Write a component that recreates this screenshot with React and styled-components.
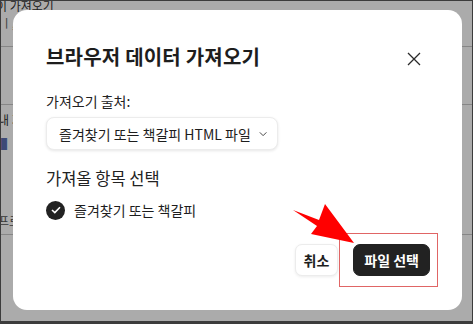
import React from 'react';
import styled, { createGlobalStyle } from 'styled-components';

const GlobalStyle = createGlobalStyle`
  html, body {
    margin: 0;
    padding: 0;
    background: #ababab;
  }
  body {
    font-family: "Noto Sans CJK KR", "Noto Sans", sans-serif;
  }
  * { box-sizing: border-box; }
`;

const Frame = styled.div`
  position: relative;
  width: 473px;
  height: 324px;
  overflow: hidden;
  border: 1px solid #3c3c3c;
  border-bottom-width: 3px;
  background: #fff;
`;

// the page lying under the modal
const Page = styled.div`
  display: flex;
  flex-direction: column;
  height: 100%;
  color: #333;
  font-size: 12px;
`;

const PageRow = styled.div`
  height: ${p => p.h}px;
  margin-left: ${p => p.shift || 0}px;
  border-bottom: ${p => (p.line ? '1px solid #c8c8c8' : 'none')};
  display: flex;
  align-items: ${p => p.align || 'center'};
  white-space: nowrap;
  overflow: hidden;
  line-height: 1;
  color: ${p => p.tone || '#333'};
`;

const Overlay = styled.div`
  position: absolute;
  inset: 0;
  background: rgba(0, 0, 0, 0.33);
`;

const Dialog = styled.div`
  position: absolute;
  left: 12px;
  top: 9px;
  width: 449px;
  height: 300px;
  background: #fff;
  border-radius: 14px;
  padding: 30px 32px 0 33px;
  display: flex;
  flex-direction: column;
  color: #1d1d1d;
`;

const Header = styled.div`
  display: flex;
  align-items: center;
  justify-content: space-between;
  height: 32px;
`;

const Title = styled.h2`
  margin: 0;
  font-size: 20px;
  font-weight: 700;
  letter-spacing: 0.2px;
`;

const CloseButton = styled.button`
  width: 32px;
  height: 32px;
  border: none;
  background: transparent;
  padding: 0;
  display: flex;
  align-items: center;
  justify-content: center;
  margin-top: 6px;
`;

const Label = styled.div`
  margin-top: ${p => p.mt}px;
  font-size: ${p => p.size}px;
  line-height: ${p => p.lh}px;
  color: #222;
`;

const Select = styled.button`
  margin-top: 6px;
  align-self: flex-start;
  width: 232px;
  height: 33px;
  display: flex;
  align-items: center;
  gap: 8px;
  padding: 0 10px 0 12px;
  border: 1px solid #ececec;
  border-radius: 8px;
  background: #fff;
  box-shadow: 0 1px 3px rgba(0, 0, 0, 0.1);
  font-family: inherit;
  font-size: 14px;
  color: #1d1d1d;
  white-space: nowrap;
`;

const CheckRow = styled.div`
  margin-top: 10px;
  display: flex;
  align-items: center;
  gap: 9px;
  height: 20px;
  font-size: 14px;
`;

const CheckCircle = styled.span`
  width: 19px;
  height: 19px;
  border-radius: 50%;
  background: #222;
  display: flex;
  align-items: center;
  justify-content: center;
`;

const Footer = styled.div`
  margin-top: 24px;
  display: flex;
  justify-content: flex-end;
  gap: 15px;
`;

const Button = styled.button`
  height: 32px;
  padding: 0 ${p => (p.primary ? 10 : 8)}px;
  border-radius: 7px;
  border: 1px solid ${p => (p.primary ? '#222' : '#ececec')};
  background: ${p => (p.primary ? '#222' : '#fff')};
  color: ${p => (p.primary ? '#fff' : '#1d1d1d')};
  box-shadow: ${p => (p.primary ? 'none' : '0 1px 3px rgba(0,0,0,0.08)')};
  font-family: inherit;
  font-size: 14px;
  font-weight: 700;
`;

const Highlight = styled.div`
  position: absolute;
  left: 338px;
  top: 232px;
  width: 99px;
  height: 54px;
  border: 1px solid #e06565;
  pointer-events: none;
`;

const Arrow = styled.svg`
  position: absolute;
  left: 0;
  top: 0;
  pointer-events: none;
`;

export default function App() {
  return (
    <>
      <GlobalStyle />
      <Frame>
        <Page>
          <PageRow h={11} align="flex-end" shift={-5}>이 가져오기</PageRow>
          <PageRow h={21} tone="#666">ㅣ, 9</PageRow>
          <PageRow h={14} line />
          <PageRow h={58} line />
          <PageRow h={30} shift={-3}>내 가져</PageRow>
          <PageRow h={18} tone="#5b6fb0">▌ 파</PageRow>
          <PageRow h={54} />
          <PageRow h={28} line shift={-3} tone="#555">프로</PageRow>
        </Page>
        <Overlay />
        <Dialog>
          <Header>
            <Title>브라우저 데이터 가져오기</Title>
            <CloseButton aria-label="닫기">
              <svg width="14" height="14" viewBox="0 0 14 14">
                <path d="M1 1 L13 13 M13 1 L1 13" stroke="#2a2a2a" strokeWidth="1.3" />
              </svg>
            </CloseButton>
          </Header>
          <Label mt={19} size={14} lh={20}>가져오기 출처:</Label>
          <Select>
            즐겨찾기 또는 책갈피 HTML 파일
            <svg width="10" height="6" viewBox="0 0 10 6">
              <path d="M1 1 L5 5 L9 1" stroke="#444" strokeWidth="1.2" fill="none" />
            </svg>
          </Select>
          <Label mt={16} size={16.5} lh={24}>가져올 항목 선택</Label>
          <CheckRow>
            <CheckCircle>
              <svg width="10" height="8" viewBox="0 0 10 8">
                <path d="M1 4 L3.8 6.6 L9 1.3" stroke="#fff" strokeWidth="1.6" fill="none" />
              </svg>
            </CheckCircle>
            즐겨찾기 또는 책갈피
          </CheckRow>
          <Footer>
            <Button>취소</Button>
            <Button primary>파일 선택</Button>
          </Footer>
        </Dialog>
        <Highlight />
        <Arrow width="473" height="324" viewBox="0 0 473 324">
          <polygon
            points="292,209 318,219 324,203 353,242 310,233 316,225"
            fill="#ff0000"
          />
        </Arrow>
      </Frame>
    </>
  );
}
